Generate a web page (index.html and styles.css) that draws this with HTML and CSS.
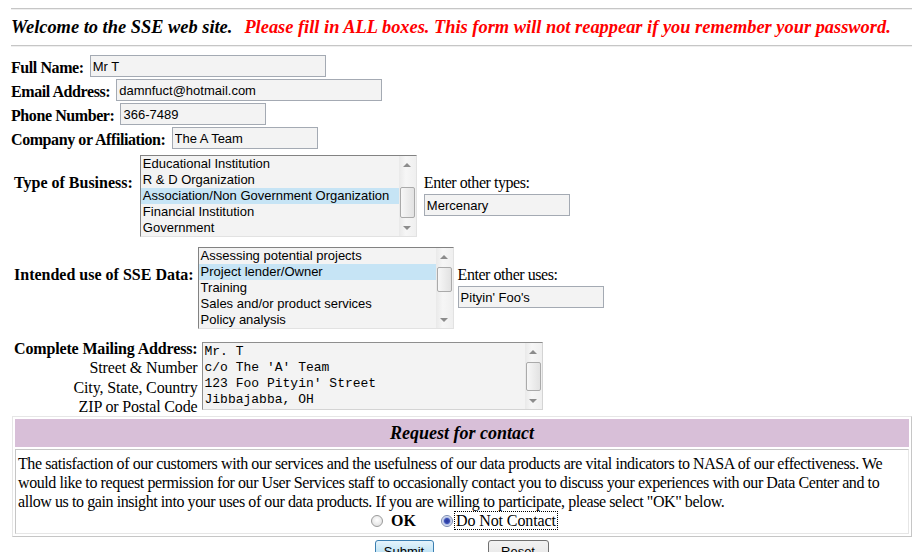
FILE: index.html
```html
<!DOCTYPE html>
<html lang="en">
<head>
    <meta charset="UTF-8">
    <title>SSE - User Registration</title>
    <link rel="stylesheet" href="styles.css">
</head>
<body>

    <hr class="rule">
    <h1 class="welcome">
        <span>Welcome to the SSE web site.</span>
        <span class="warn">Please fill in ALL boxes. This form will not reappear if you remember your password.</span>
    </h1>
    <hr class="rule">

    <form class="signup">
        <!-- Datos personales -->
        <div class="field"><label>Full Name:</label><input class="text w-name" value="Mr T"></div>
        <div class="field"><label>Email Address:</label><input class="text w-email" value="damnfuct@hotmail.com"></div>
        <div class="field"><label>Phone Number:</label><input class="text w-short" value="366-7489"></div>
        <div class="field"><label>Company or Affiliation:</label><input class="text w-short" value="The A Team"></div>

        <!-- Tipo de negocio -->
        <div class="pick first">
            <label class="pick-label">Type of Business:</label>
            <div class="listbox lb-business">
                <div class="opts">
                    <div class="opt">Educational Institution</div>
                    <div class="opt">R &amp; D Organization</div>
                    <div class="opt sel">Association/Non Government Organization</div>
                    <div class="opt">Financial Institution</div>
                    <div class="opt">Government</div>
                </div>
                <div class="vscroll">
                    <div class="sb-up"></div>
                    <div class="thumb thumb-business"></div>
                    <div class="sb-down"></div>
                </div>
            </div>
            <div class="other">
                <label>Enter other types:</label>
                <input class="text w-short" value="Mercenary">
            </div>
        </div>

        <!-- Uso de los datos -->
        <div class="pick second">
            <label class="pick-label">Intended use of SSE Data:</label>
            <div class="listbox lb-usage">
                <div class="opts">
                    <div class="opt">Assessing potential projects</div>
                    <div class="opt sel">Project lender/Owner</div>
                    <div class="opt">Training</div>
                    <div class="opt">Sales and/or product services</div>
                    <div class="opt">Policy analysis</div>
                </div>
                <div class="vscroll">
                    <div class="sb-up"></div>
                    <div class="thumb thumb-usage"></div>
                    <div class="sb-down"></div>
                </div>
            </div>
            <div class="other">
                <label>Enter other uses:</label>
                <input class="text w-short" value="Pityin' Foo's">
            </div>
        </div>

        <!-- Direccion -->
        <div class="mailing">
            <div class="mail-labels">
                <b>Complete Mailing Address:</b><br>
                Street &amp; Number<br>
                City, State, Country<br>
                ZIP or Postal Code
            </div>
            <div class="textbox">
                <div class="lines">Mr. T
c/o The 'A' Team
123 Foo Pityin' Street
Jibbajabba, OH</div>
                <div class="vscroll">
                    <div class="sb-up"></div>
                    <div class="thumb thumb-address"></div>
                    <div class="sb-down"></div>
                </div>
            </div>
        </div>

        <table class="contact">
            <tr><th>Request for contact</th></tr>
            <tr>
                <td>
                    <div class="blurb">The satisfaction of our customers with our services and the usefulness of our data products are vital indicators to NASA of our effectiveness. We<br>would like to request permission for our User Services staff to occasionally contact you to discuss your experiences with our Data Center and to<br>allow us to gain insight into your uses of our data products. If you are willing to participate, please select "OK" below.</div>
                    <div class="choice">
                        <input type="radio" name="contact" class="radio">
                        <b class="ok">OK</b>
                        <input type="radio" name="contact" class="radio radio-two" checked>
                        <span class="focused">Do Not Contact</span>
                    </div>
                </td>
            </tr>
        </table>

        <div class="actions">
            <button type="button" class="btn btn-submit">Submit</button>
            <button type="button" class="btn btn-reset">Reset</button>
        </div>
    </form>

</body>
</html>
```

FILE: styles.css
```css
/* General */
html, body {
    overflow: hidden;
}

body {
    margin: 0;
    padding: 8px 10px 0 11px;
    font-family: "Liberation Serif", "Times New Roman", serif;
    font-size: 16px;
    color: #000;
    background: #fff;
}

.rule {
    margin: 0;
    height: 0;
    border: 0;
    border-top: 1px solid #c6c6c6;
    border-bottom: 1px solid #efefef;
}

.welcome {
    margin: 0;
    height: 35px;
    display: flex;
    align-items: center;
    gap: 12px;
    font-size: 18.4px;
    font-style: italic;
    font-weight: bold;
    white-space: nowrap;
}

.welcome .warn {
    color: #ff0000;
}

/* Campos de texto */
.signup {
    padding-top: 8px;
}

.field {
    display: flex;
    height: 24px;
}

.field label {
    font-weight: bold;
    padding-top: 4px;
    line-height: 18px;
    letter-spacing: -0.42px;
}

.field input {
    margin-left: 6px;
}

.text {
    height: 22px;
    box-sizing: border-box;
    margin: 0;
    padding: 0 2px;
    border: 1px solid #a4aab3;
    background: #f3f3f3;
    color: #000;
    font: 13px "Liberation Sans", Arial, sans-serif;
}

.w-name { width: 236px; }
.w-email { width: 266px; }
.w-short { width: 146px; }

/* Listas */
.pick {
    display: flex;
    gap: 6px;
    margin-top: 10px;
    padding-left: 3px;
}

.pick.first {
    margin-top: 4px;
    gap: 7px;
}

.pick.second {
    gap: 4px;
}

.pick-label {
    font-weight: bold;
    padding-top: 18px;
    line-height: 19px;
}

.other {
    display: flex;
    flex-direction: column;
    align-items: flex-start;
    padding-top: 18px;
    line-height: 19px;
    letter-spacing: -0.45px;
}

.other input {
    margin-top: 2px;
    letter-spacing: 0;
}

.listbox {
    display: flex;
    height: 82px;
    box-sizing: border-box;
    border: 1px solid;
    border-color: #828282 #e2e2e2 #e2e2e2 #828282;
    background: #f3f3f3;
    font: 13px "Liberation Sans", Arial, sans-serif;
}

.lb-business { width: 277px; }
.lb-usage { width: 256px; }

.opts {
    flex: 1;
    overflow: hidden;
}

.opt {
    height: 16px;
    line-height: 16px;
    padding-left: 2px;
    white-space: nowrap;
}

.opt.sel {
    background: #c6e4f5;
}

/* Barra de desplazamiento */
.vscroll {
    width: 17px;
    display: flex;
    flex-direction: column;
    background: linear-gradient(to right, #e9e9e9, #f6f6f6 40%, #efefef);
}

.sb-up, .sb-down {
    height: 17px;
    display: flex;
    align-items: center;
    justify-content: center;
}

.sb-up::before, .sb-down::before {
    content: "";
    border-left: 4px solid transparent;
    border-right: 4px solid transparent;
}

.sb-up::before { border-bottom: 4px solid #8c8c8c; }
.sb-down::before { border-top: 4px solid #8c8c8c; }

.sb-down {
    margin-top: auto;
}

.thumb {
    margin: 0 1px;
    box-sizing: border-box;
    border: 1px solid #aaaaaa;
    border-radius: 2px;
    background: linear-gradient(to right, #f7f7f7, #e2e2e2);
}

.thumb-business { margin-top: 14px; height: 31px; }
.thumb-usage { margin-top: 2px; height: 25px; }
.thumb-address { margin-top: 2px; height: 29px; }

/* Direccion */
.mailing {
    display: flex;
    align-items: flex-start;
    gap: 4px;
    margin-top: 10px;
    padding-left: 3px;
}

.mail-labels {
    text-align: right;
    line-height: 19.3px;
    white-space: nowrap;
    letter-spacing: -0.15px;
}

.mail-labels br {
    letter-spacing: 0;
}

.textbox {
    display: flex;
    margin-top: 3px;
    width: 341px;
    height: 68px;
    box-sizing: border-box;
    border: 1px solid;
    border-color: #8e8e8e #d4d4d4 #d4d4d4 #8e8e8e;
    background: #f3f3f3;
}

.lines {
    flex: 1;
    padding: 1px 2px;
    font: 13px "Liberation Mono", "Courier New", monospace;
    line-height: 16px;
    white-space: pre;
    overflow: hidden;
}

/* Tabla de contacto */
.contact {
    width: 900px;
    margin-left: 1px;
    border-collapse: separate;
    border-spacing: 2px;
    border: 1px solid;
    border-color: #e6e6e6 #c6c6c6 #c6c6c6 #e6e6e6;
}

.contact th {
    height: 28px;
    padding: 0;
    background: #d8bfd8;
    font-size: 18px;
    font-style: italic;
    font-weight: bold;
}

.contact td {
    padding: 4px 2px 3px;
    border: 1px solid;
    border-color: #c6c6c6 #e6e6e6 #e6e6e6 #c6c6c6;
    line-height: 19px;
}

.blurb {
    white-space: nowrap;
    letter-spacing: -0.42px;
}

.choice {
    display: flex;
    align-items: center;
    justify-content: center;
    height: 19px;
    margin-left: 4px;
}

.radio {
    appearance: none;
    width: 12px;
    height: 12px;
    margin: 0;
    border: 1px solid #9a9a9a;
    border-radius: 50%;
    background: radial-gradient(circle at 50% 40%, #ffffff, #dadada);
}

.radio:checked {
    border-color: #7a8ab0;
    background: radial-gradient(circle, #27359a 0, #3a4fb5 2.5px, #a9b8e4 3.5px, #eef0f6 5px);
}

.ok {
    margin-left: 8px;
}

.radio-two {
    margin-left: 25px;
}

.focused {
    margin-left: 2px;
    padding: 0 1px;
    outline: 1px dotted #000;
    line-height: 17px;
    letter-spacing: -0.1px;
}

/* Botones */
.actions {
    display: flex;
    justify-content: center;
    gap: 54px;
    margin-top: 3px;
}

.btn {
    height: 23px;
    padding: 0;
    border-radius: 3px;
    font: 13px "Liberation Sans", Arial, sans-serif;
    color: #000;
}

.btn-submit {
    width: 59px;
    border: 1px solid #3c7fb1;
    background: linear-gradient(#e5f4fc, #c4e5f6 50%, #98d1ef 51%, #68b3db);
}

.btn-reset {
    width: 61px;
    border: 1px solid #707070;
    background: linear-gradient(#f2f2f2, #ebebeb 50%, #dddddd 51%, #cfcfcf);
}
```
